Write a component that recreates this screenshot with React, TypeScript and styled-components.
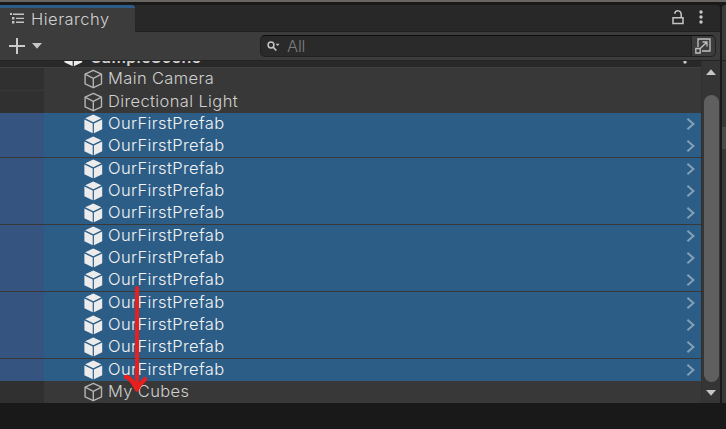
import React from "react";
import styled, { createGlobalStyle } from "styled-components";

const GlobalStyle = createGlobalStyle`
  html, body { margin: 0; padding: 0; background: #191919; overflow: hidden; }
  * { box-sizing: border-box; }
  svg { display: block; flex: none; }
`;

const Screen = styled.div`
  position: relative;
  display: flex;
  flex-direction: column;
  width: 726px;
  height: 429px;
  overflow: hidden;
  background: #191919;
  color: #d2d2d2;
  font: 360 16.5px/22px Inter, "Liberation Sans", sans-serif;
  letter-spacing: 0.37px;
`;

const TopStrip = styled.div`
  flex: none;
  height: 5px;
  background: #191919;
  border-top: 2px solid #696563;
`;

const Workspace = styled.div`
  display: flex;
  gap: 2px;
  height: 398px;
`;

const Panel = styled.section`
  display: flex;
  flex-direction: column;
  width: 720px;
  background: #383838;
  border-top-right-radius: 4px;
  overflow: hidden;
`;

const NextPanel = styled.aside`
  display: flex;
  flex-direction: column;
  flex: 1;
  background: #383838;
  border-top-left-radius: 4px;
  overflow: hidden;
`;

const NextBlock = styled.div<{ $h: number; $c: string }>`
  flex: none;
  height: ${(p) => p.$h}px;
  background: ${(p) => p.$c};
`;

const TabBar = styled.header`
  display: flex;
  flex: none;
  justify-content: space-between;
  height: 27px;
  background: #282828;
`;

const Tab = styled.div`
  display: flex;
  align-items: center;
  gap: 7px;
  width: 135px;
  padding: 0 0 2px 9px;
  background: #3c3c3c;
  border-top: 3px solid #2c5d87;
  border-top-right-radius: 3px;
  letter-spacing: 0.5px;
`;

const TabActions = styled.div`
  display: flex;
  flex: 1;
  align-items: center;
  justify-content: flex-end;
  gap: 15px;
  padding: 0 17px 2px 0;
  border-bottom: 1px solid #212121;
`;

const Toolbar = styled.div`
  display: flex;
  flex: none;
  align-items: center;
  height: 29px;
  padding: 0 4px 0 9px;
  background: #3c3c3c;
  border-bottom: 1px solid #232323;
`;

const CreateButton = styled.div`
  display: flex;
  align-items: center;
  gap: 7px;
  width: 251px;
`;

const Search = styled.div`
  display: flex;
  align-items: center;
  flex: 1;
  height: 22px;
  padding-left: 6px;
  background: #2a2a2a;
  border: 1px solid #212121;
  border-top-color: #0d0d0d;
  border-radius: 5px;
  color: #7d7d7d;
  overflow: hidden;
`;

const SearchHint = styled.span`
  flex: 1;
  padding-left: 7px;
  letter-spacing: -0.2px;
`;

const SearchExpand = styled.div`
  display: flex;
  align-items: center;
  justify-content: center;
  width: 24px;
  height: 20px;
  padding-right: 2px;
  background: #3c3c3c;
  border-left: 1px solid #212121;
`;

const Body = styled.div`
  display: flex;
  height: 342px;
`;

const Tree = styled.div`
  display: flex;
  flex-direction: column;
  width: 701px;
`;

const SceneRow = styled.div`
  display: flex;
  flex: none;
  align-items: flex-end;
  height: 7px;
  padding: 0 14px 0 50px;
  overflow: hidden;
  background: #292929;
  border-bottom: 1px solid #3f3f3f;
  font-weight: 600;
  font-size: 16px;
`;

const SceneContent = styled.div`
  display: flex;
  flex: 1;
  align-items: center;
  height: 21px;
`;

const SceneName = styled.span`
  flex: 1;
  padding-left: 8px;
  letter-spacing: 0.4px;
`;

const Row = styled.div<{ $selected?: boolean; $divided?: boolean }>`
  display: flex;
  flex: none;
  align-items: center;
  height: ${(p) => (p.$divided ? 23 : 22)}px;
  padding-right: 6px;
  border-bottom: ${(p) => (p.$divided ? "1px solid #383838" : "none")};
  background: ${(p) => (p.$selected ? "#2c5d87" : "#383838")};
  color: ${(p) => (p.$selected ? "#f4f4f4" : "#d0d0d0")};
`;

const Gutter = styled.div<{ $selected?: boolean }>`
  align-self: stretch;
  width: 44px;
  margin-right: 40px;
  background: ${(p) => (p.$selected ? "#35547f" : "#303030")};
`;

const Label = styled.span`
  flex: 1;
  padding-left: 5px;
  height: 22px;
  line-height: 21px;
`;

const Scrollbar = styled.div`
  display: flex;
  flex-direction: column;
  align-items: center;
  width: 19px;
  background: #353535;
  border-left: 1px solid #303030;
`;

const ScrollButton = styled.div<{ $h: number }>`
  display: flex;
  flex: none;
  align-items: center;
  justify-content: center;
  width: 100%;
  height: ${(p) => p.$h}px;
`;

const Thumb = styled.div`
  flex: none;
  width: 15px;
  height: 287px;
  margin-top: 12px;
  background: #5f5f5f;
  border-radius: 8px;
`;

const ArrowLayer = styled.svg`
  position: absolute;
  left: 118px;
  top: 280px;
`;

const Cube = ({ solid }: { solid?: boolean }) =>
  solid ? (
    <svg width="19" height="20" viewBox="0 0 19 20" fill="#ececec">
      <path d="M9.3 .6 17.4 4.3 9.3 8.2 1.2 4.3Z" />
      <path d="M.4 5.6 8.7 9.5V19.2L.4 15.3Z" />
      <path d="M18.2 5.6 9.9 9.5V19.2L18.2 15.3Z" />
    </svg>
  ) : (
    <svg width="19" height="20" viewBox="0 0 19 20" fill="none" stroke="#b4b4b4" strokeWidth="1.4" strokeLinejoin="round">
      <path d="M9.3 1.3 17.5 5.2V14.8L9.3 18.7 1.1 14.8V5.2Z" />
      <path d="M1.1 5.2 9.3 9.3 17.5 5.2M9.3 9.3V18.7" />
    </svg>
  );

const Triangle = ({ up }: { up?: boolean }) => (
  <svg width="10" height="6" viewBox="0 0 10 6" fill="#c6c6c6">
    <path d={up ? "M0 6 5 0.2 10 6Z" : "M0 0H10L5 5.8Z"} />
  </svg>
);

const Chevron = () => (
  <svg width="9" height="12" viewBox="0 0 9 12" fill="none" stroke="#84a0b8" strokeWidth="2">
    <path d="M1.4 .8 7.4 6 1.4 11.2" />
  </svg>
);

const ListIcon = () => (
  <svg width="15" height="12" viewBox="0 0 15 12" fill="#c4c4c4">
    <path d="M1 0h2v2H1zM4 .6h11v1.3H4zM3 4h2.4v2.4H3zM7 4.7h8V6H7zM3 8h2.4v2.4H3zM7 8.6h8v1.3H7z" />
  </svg>
);

const LockIcon = () => (
  <svg width="12" height="15" viewBox="0 0 12 15" fill="none" stroke="#c4c4c4" strokeWidth="1.5">
    <path d="M1 7.8H11V13.6H1Z" />
    <path d="M2.8 3.8C3.2 -.2 9.2 -.2 9.2 4.4V7.6" />
  </svg>
);

const MoreIcon = () => (
  <svg width="4" height="14" viewBox="0 0 4 14" fill="#c8c8c8">
    <circle cx="2" cy="2" r="1.7" />
    <circle cx="2" cy="7" r="1.7" />
    <circle cx="2" cy="12" r="1.7" />
  </svg>
);

const rows = [
  { name: "Main Camera", divided: true },
  { name: "Directional Light" },
  ...Array.from({ length: 12 }, (_, i) => ({
    name: "OurFirstPrefab",
    prefab: true,
    divided: i % 3 === 1 && i < 11,
  })),
  { name: "My Cubes" },
] as { name: string; prefab?: boolean; divided?: boolean }[];

export default function App() {
  return (
    <>
      <GlobalStyle />
      <Screen>
        <TopStrip />
        <Workspace>
          <Panel>
            <TabBar>
              <Tab>
                <ListIcon />
                Hierarchy
              </Tab>
              <TabActions>
                <LockIcon />
                <MoreIcon />
              </TabActions>
            </TabBar>
            <Toolbar>
              <CreateButton>
                <svg width="16" height="16" viewBox="0 0 16 16" stroke="#cacaca" strokeWidth="2">
                  <path d="M8 0V16M0 8H16" />
                </svg>
                <Triangle />
              </CreateButton>
              <Search>
                <svg width="13" height="11" viewBox="0 0 13 11" fill="none" stroke="#c4c4c4">
                  <circle cx="4" cy="4" r="2.9" strokeWidth="1.5" />
                  <path d="M6 6 9.3 9.5" strokeWidth="1.8" />
                  <path d="M8.6 2.7H12.6L10.6 5Z" fill="#c4c4c4" stroke="none" />
                </svg>
                <SearchHint>All</SearchHint>
                <SearchExpand>
                  <svg width="16" height="16" viewBox="0 0 16 16" fill="none" stroke="#c0c0c0" strokeWidth="1.3">
                    <path d="M3 9V1H15V13H7M.8 10.5H5.2V15H.8ZM5.2 10.5 12 4M7.5 4H12V8.5" />
                  </svg>
                </SearchExpand>
              </Search>
            </Toolbar>
            <Body>
              <Tree>
                <SceneRow>
                  <SceneContent>
                    <svg width="14" height="20" viewBox="0 0 14 20" fill="#555">
                      <path d="M1 10H5L3 15Z" />
                    </svg>
                    <Cube solid />
                    <SceneName>SampleScene</SceneName>
                    <MoreIcon />
                  </SceneContent>
                </SceneRow>
                {rows.map((r, i) => (
                  <Row key={i} $selected={r.prefab} $divided={r.divided}>
                    <Gutter $selected={r.prefab} />
                    <Cube solid={r.prefab} />
                    <Label>{r.name}</Label>
                    {r.prefab && <Chevron />}
                  </Row>
                ))}
              </Tree>
              <Scrollbar>
                <ScrollButton $h={22}>
                  <Triangle up />
                </ScrollButton>
                <Thumb />
                <ScrollButton $h={21}>
                  <Triangle />
                </ScrollButton>
              </Scrollbar>
            </Body>
          </Panel>
          <NextPanel>
            <NextBlock $h={55} $c="#3a3a3a" />
            <NextBlock $h={1} $c="#232323" />
            <NextBlock $h={66} $c="#383838" />
            <NextBlock $h={22} $c="#4a4a4a" />
          </NextPanel>
        </Workspace>
        <ArrowLayer width="40" height="120" viewBox="0 0 40 120" fill="none" stroke="#e81f1f" strokeWidth="4" strokeLinecap="round" strokeLinejoin="round">
          <path d="M19 8V109" />
          <path d="M8 97C14 98 16 105 19 109.5C20 105 25 102 27 99" strokeWidth="4.4" />
        </ArrowLayer>
      </Screen>
    </>
  );
}
